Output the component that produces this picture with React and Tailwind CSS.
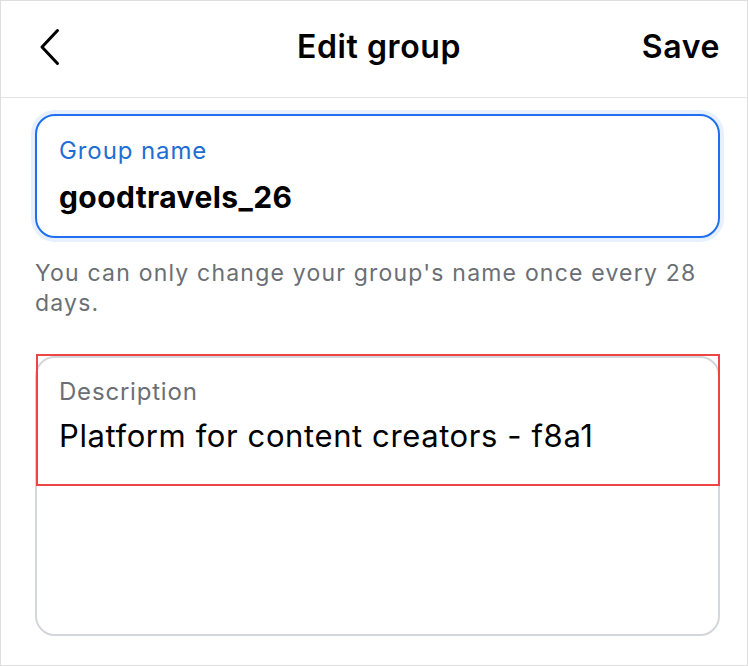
export default function App() {
  return (
    <div
      className="relative w-[748px] h-[666px] bg-white border border-[#dedede] overflow-hidden flex flex-col"
      style={{ fontFamily: 'Inter, "Noto Sans", sans-serif' }}
    >
      <header className="h-[97px] shrink-0 border-b border-[#e3e3e3] flex items-center pl-[37px] pr-[27px]">
        <div className="w-[80px] flex items-center -mt-[4px]">
          <svg width="24" height="40" viewBox="0 0 24 40" fill="none">
            <path d="M19.5 3.5 L4 20 L19.5 36.5" stroke="#000" strokeWidth="3" strokeLinecap="round" strokeLinejoin="round" />
          </svg>
        </div>
        <h1 className="flex-1 text-center text-[32px] leading-[40px] font-semibold text-black tracking-[0.6px] -mt-[4px]">Edit group</h1>
        <button className="w-[80px] text-right text-[32px] leading-[40px] font-semibold text-black tracking-[0.6px] -mt-[4px]">Save</button>
      </header>

      <main className="pl-[34px] pr-[27px] pt-[16px] flex flex-col">
        <div className="rounded-[20px] border-2 border-[#1f6ff0] ring-[4px] ring-[#e7f0fd] h-[124px] px-[22px] pt-[20px]">
          <div className="text-[24px] leading-[30px] text-[#1f6ed4] tracking-[0.9px]">Group name</div>
          <div className="text-[30px] leading-[40px] font-bold text-black mt-[11px] tracking-[0.4px]">goodtravels_26</div>
        </div>

        <p className="text-[23px] leading-[30px] text-[#6b6f75] mt-[20px] tracking-[1.2px]">
          You can only change your group's name once every 28 days.
        </p>

        <div className="relative rounded-[20px] border-2 border-[#d3d6da] h-[280px] mt-[38px] px-[22px] pt-[19px]">
          <div className="text-[24px] leading-[30px] text-[#6b6f75] tracking-[0.8px]">Description</div>
          <div className="text-[31px] leading-[40px] text-black mt-[9px] tracking-[0.6px]">Platform for content creators - f8a1</div>
          <div className="absolute left-[-1px] top-[-4px] w-[684px] h-[132px] border-2 border-[#ef4444]" />
        </div>
      </main>
    </div>
  );
}
